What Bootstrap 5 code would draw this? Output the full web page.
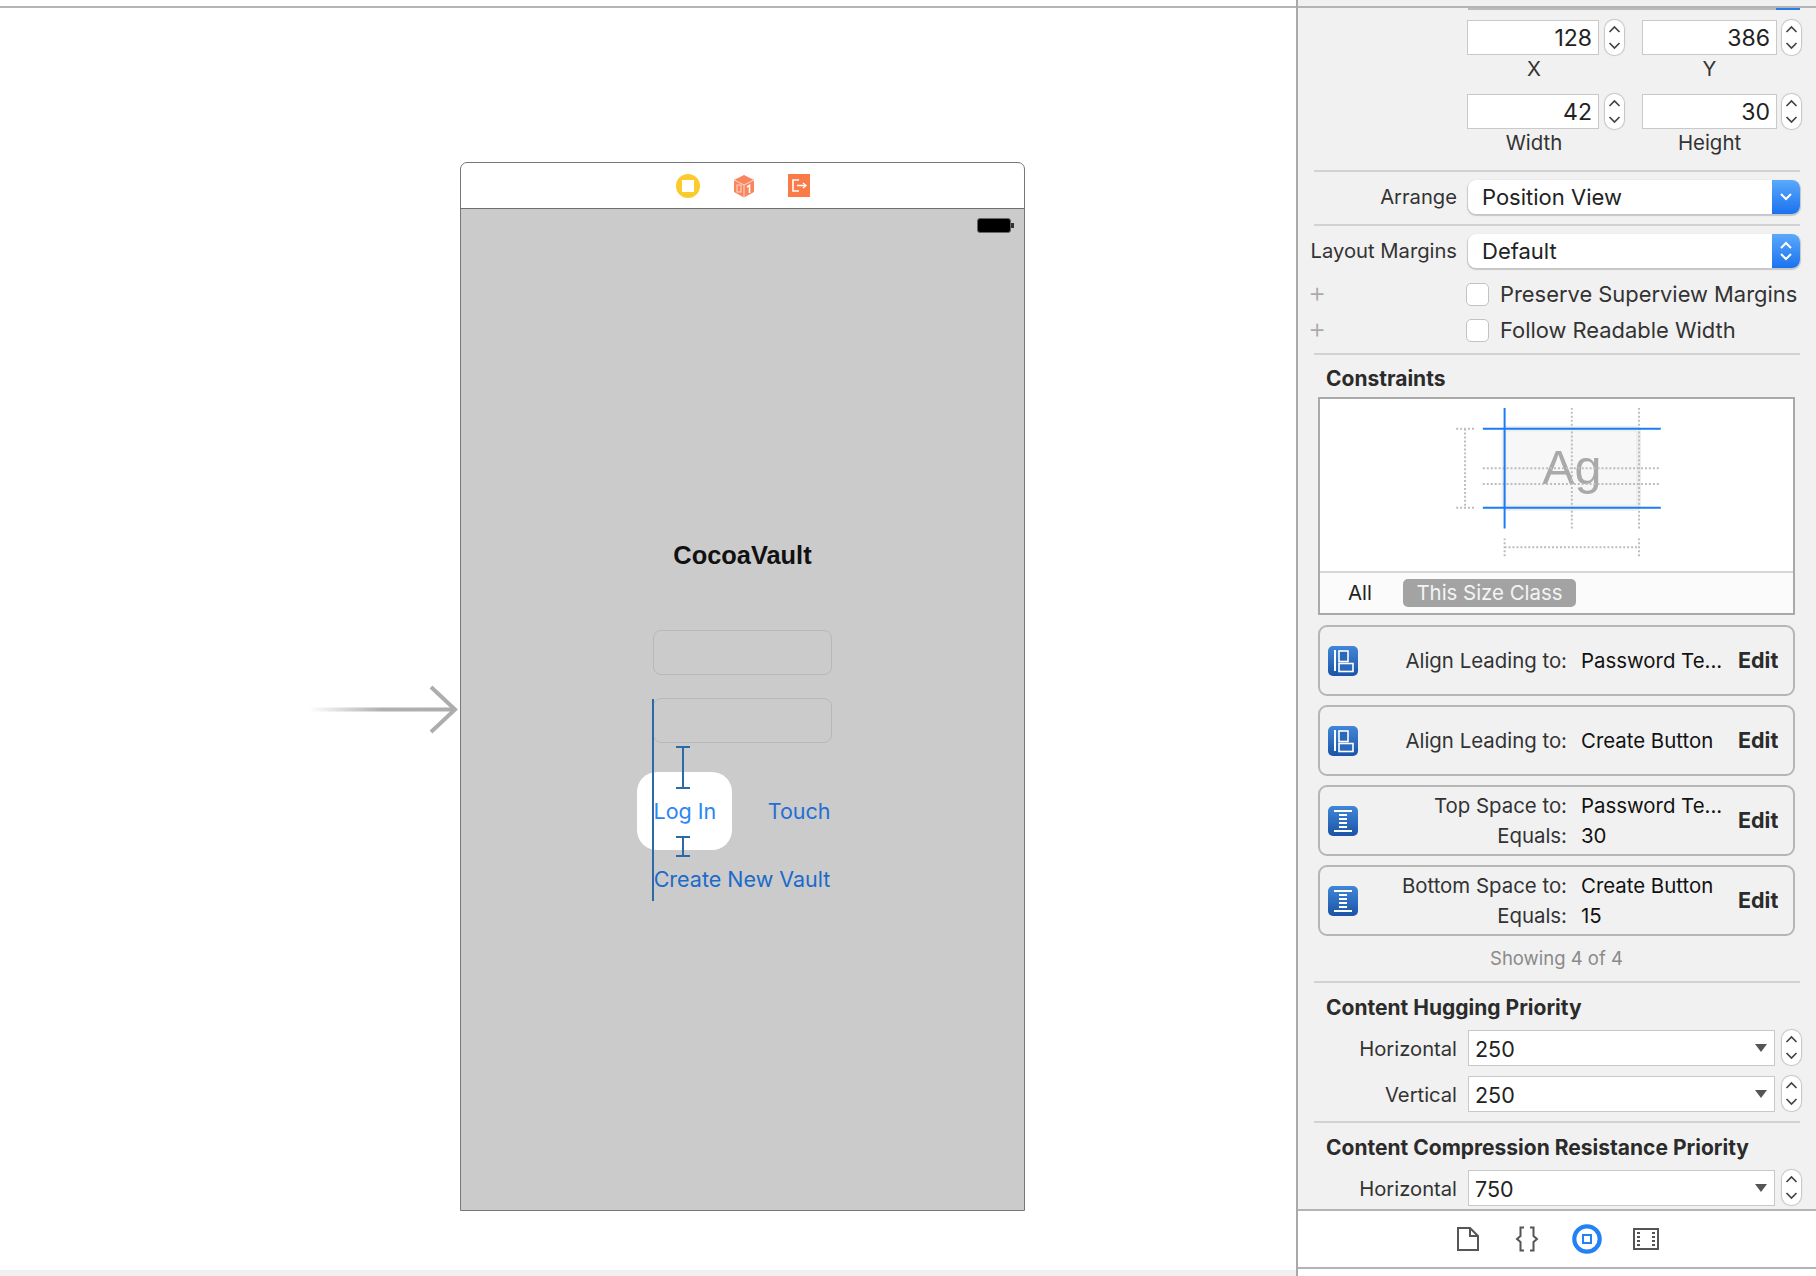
<!DOCTYPE html>
<html lang="en">
<head>
  <meta charset="UTF-8" />
  <title>CocoaVault storyboard</title>
  <link href="https://cdn.jsdelivr.net/npm/bootstrap@5.3.3/dist/css/bootstrap.min.css" rel="stylesheet">
  <style>
    html, body { height: 1276px; overflow: hidden; background: #fff; }
    body { font-family: Inter, "Noto Sans", sans-serif; font-size: 20.4px; color: #333; }

    /* canvas */
    .canvas-pane { width: 1296px; height: 1276px; border-top: 2px solid #b4b4b4; margin-top: 6px; }
    .canvas-foot { position: absolute; left: 0; right: 0; bottom: 6px; height: 6px; background: #f0f0f0; }
    .entry-arrow { position: absolute; left: 307px; top: 672px; }
    .device { position: absolute; left: 460px; top: 154px; width: 565px; height: 1049px; border: 1.5px solid #777; border-radius: 7px 7px 0 0; }
    .device-bar { height: 46px; gap: 33px; border-bottom: 1.5px solid #6e6e6e; }
    .device-screen { background: #cbcbcb; }
    .battery { margin: 9px 10px 0 0; }
    .app-title { font-family: "Liberation Sans", sans-serif; font-weight: 700; font-size: 25.4px; color: #111; margin-top: 307px; line-height: 30px; }
    .login-stack { width: 179px; margin: 60px 1px 0 0; font-size: 21.5px; color: #1f6fd6; }
    .field-box { height: 45px; border: 1.5px solid #b8b8b8; border-radius: 8px; margin-bottom: 23px; }
    .login-row { height: 46px; margin-top: 45px; padding: 0 1px; position: relative; }
    .login-active { position: absolute; left: -16px; top: -16px; width: 95px; height: 78px; background: #fff; border-radius: 20px; }
    .login-text { position: relative; color: #2a86f5; }
    .create-row { margin-top: 23px; line-height: 44px; color: #1c6ac9; white-space: nowrap; }
    .edge-line { position: absolute; left: 191px; top: 490px; width: 2px; height: 202px; background: #2a6aa8; }
    .beam { position: absolute; left: 215px; width: 14px; border-top: 2px solid #2a6aa8; border-bottom: 2px solid #2a6aa8; }
    .beam::after { content: ""; position: absolute; left: 6px; top: 0; bottom: 0; width: 2px; background: #2a6aa8; }
    .beam-top { top: 537px; height: 43px; }
    .beam-bottom { top: 627px; height: 21px; }

    /* inspector */
    .inspector { width: 520px; height: 1276px; background: #f1f1f1; border-left: 2px solid #a9a9a9; overflow: hidden; }
    .insp-top { height: 4px; border-top: 2px solid #b4b4b4; margin-top: 6px; }
    .insp-top-stub { height: 2px; margin-left: 170px; width: 332px; background: #bababa; border-right: 24px solid #2a7bf0; }
    .num-row { margin: 10px 0 0 169px; height: 35px; }
    .num-box { height: 35px; background: #fff; border: 1.5px solid #c9c9c9; text-align: right; padding-right: 6px; line-height: 34px; font-size: 23px; color: #222; }
    .num-a { width: 132px; }
    .num-b { width: 135px; margin-left: 18px; }
    .step-a { margin-left: 6px; }
    .step-b { margin-left: 5px; }
    .stepper { display: block; flex: none; width: 19px; height: 35px; background: #fff; border-radius: 9px; box-shadow: 0 0 1px 1px #c4c4c4; }
    .cap-row { margin-left: 170px; height: 28px; line-height: 28px; }
    .cap-a { width: 132px; margin-right: 25px; }
    .cap-b { width: 135px; margin-left: 17px; }
    .mb-row { margin-bottom: 11px; }
    .mb-sep { margin-bottom: 13px; }
    .insp-sep { height: 2px; background: #d2d2d2; margin: 0 16px; }
    .form-line { height: 34px; margin-top: 8px; margin-bottom: 10px; }
    .side-label { width: 159px; text-align: right; flex: none; margin-right: 11px; white-space: nowrap; font-size: 20.2px; }
    .pop-select { width: 332px; height: 34px; background: #fff; border-radius: 8px; box-shadow: 0 1px 1px 1px #c6c6c6; overflow: hidden; font-size: 22px; color: #222; padding-left: 14px; }
    .pop-cap { width: 28px; background: linear-gradient(#5aa9fb, #1b72ee); margin-left: auto; }
    .check-line { height: 23px; margin-left: 168px; white-space: nowrap; font-size: 21.9px; position: relative; }
    .check-box { width: 23px; height: 23px; background: #fff; border: 1.5px solid #c2c2c2; border-radius: 5px; margin-right: 11px; flex: none; }
    .plus-mark { position: absolute; left: -158px; top: -5px; color: #aaa; font-size: 28px; line-height: 28px; font-weight: 300; }
    .mt-check-1 { margin-top: 15px; }
    .mt-check-2 { margin-top: 13px; margin-bottom: 11px; }
    .sec-title { font-weight: 700; color: #2b2b2b; font-size: 21px; padding-left: 28px; white-space: nowrap; }
    .title-constraints { height: 42px; line-height: 48px; }
    .cons-box { width: 477px; height: 218px; margin-left: 20px; border: 2px solid #a9a9a9; background: #fff; }
    .cons-canvas { display: block; height: 174px; border-bottom: 2px solid #d6d6d6; }
    .cons-tabs { height: 40px; background: #fbfbfb; gap: 31px; padding-left: 28px; color: #222; }
    .size-pill { width: 173px; height: 28px; line-height: 27px; background: #a3a3a3; color: #f4f4f4; border-radius: 5px; text-align: center; }
    .cons-list { margin: 10px 21px 0 20px; gap: 9px; }
    .cons-card { height: 71px; border: 2px solid #b6b6b6; border-radius: 9px; padding-left: 8px; }
    .cons-icon { width: 30px; height: 30px; flex: none; }
    .cons-text { width: 380px; flex: none; line-height: 30px; white-space: nowrap; }
    .cons-key { width: 209px; text-align: right; margin-right: 14px; flex: none; }
    .cons-val { color: #111; }
    .cons-edit { font-weight: 700; color: #2b2b2b; font-size: 21.5px; }
    .showing { height: 45px; color: #8a8a8a; font-size: 18.5px; margin-left: 20px; width: 477px; }
    .title-priority { height: 46px; line-height: 50px; }
    .combo-line { height: 36px; margin-bottom: 10px; padding-top: 1px; }
    .combo-line .side-label { padding-top: 3px; }
    .combo-box { width: 307px; height: 36px; flex: none; background: #fff; border: 1.5px solid #c9c9c9; padding: 3px 0 0 6px; font-size: 21.5px; color: #222; margin-right: 7px; }
    .combo-tri { margin: -3px 7px 0 auto; width: 0; height: 0; border-left: 6.5px solid transparent; border-right: 6.5px solid transparent; border-top: 8px solid #555; }
    .insp-bar { height: 60px; margin-top: 4px; border-top: 2px solid #b4b4b4; border-bottom: 2px solid #b4b4b4; background: #fff; }
    .insp-tail { height: 12px; background: #fff; }
    .tool-slot { width: 59.6px; }
  </style>
</head>
<body class="d-flex">

  <!-- shared glyphs -->
  <svg width="0" height="0" class="position-absolute">
    <symbol id="stepper-glyph" viewBox="0 0 19 35">
      <path d="M4.500 12l5-5 5 5M4.500 23l5 5 5-5" fill="none" stroke="#444" stroke-width="1.700"/>
    </symbol>
    <symbol id="align-glyph" viewBox="0 0 30 30">
      <rect width="30" height="30" rx="5" fill="url(#icon-blue)"/>
      <path d="M7 4v21" stroke="#fff" stroke-width="2"/>
      <rect x="11" y="5" width="9" height="10.500" fill="#2b68bb" stroke="#fff" stroke-width="1.600"/>
      <rect x="11" y="17.500" width="14" height="8" fill="#2b68bb" stroke="#fff" stroke-width="1.600"/>
    </symbol>
    <symbol id="space-glyph" viewBox="0 0 30 30">
      <rect width="30" height="30" rx="5" fill="url(#icon-blue)"/>
      <path d="M6 5h18M6 25h18" stroke="#fff" stroke-width="1.800"/>
      <path d="M11 9h8M11 13h8M11 17h8M11 21h8" stroke="#fff" stroke-width="1.800"/>
    </symbol>
    <linearGradient id="icon-blue" x1="0" y1="0" x2="0" y2="1">
      <stop offset="0" stop-color="#4186d8"/>
      <stop offset="1" stop-color="#1a54a6"/>
    </linearGradient>
  </svg>

  <!-- storyboard canvas -->
  <div class="canvas-pane position-relative flex-shrink-0">
    <svg class="entry-arrow" width="152" height="60" viewBox="0 0 152 60">
      <defs>
        <linearGradient id="arrow-fade" x1="0" y1="0" x2="1" y2="0">
          <stop offset="0" stop-color="#b0b0b0" stop-opacity="0"/>
          <stop offset="0.5" stop-color="#b0b0b0"/>
          <stop offset="1" stop-color="#adadad"/>
        </linearGradient>
      </defs>
      <rect x="2" y="27.500" width="146" height="4" fill="url(#arrow-fade)"/>
      <path d="M124 7l24 22.500-24 22.500" fill="none" stroke="#adadad" stroke-width="4"/>
    </svg>

    <div class="device d-flex flex-column">
      <div class="device-bar d-flex align-items-center justify-content-center flex-shrink-0">
        <svg width="24" height="24" viewBox="0 0 24 24">
          <circle cx="12" cy="12" r="12" fill="#fbca2f"/>
          <rect x="6" y="6" width="12" height="12" fill="#fff"/>
        </svg>
        <svg width="22" height="24" viewBox="0 0 22 24">
          <path d="M11 1l10 5v12l-10 5.500-10-5.500V6z" fill="#f9855f"/>
          <path d="M1 6l10 5 10-5M11 11v12" fill="none" stroke="#fdd9cc" stroke-width="1"/>
          <path d="M14 13l2.500-1.500V19" fill="none" stroke="#fff" stroke-width="1.600"/>
          <rect x="4" y="11" width="4" height="7" fill="none" stroke="#fdd9cc"/>
        </svg>
        <svg width="22" height="23" viewBox="0 0 22 23">
          <rect width="22" height="23" fill="#fb7b48"/>
          <path d="M11 6H5v11h6" fill="none" stroke="#fff" stroke-width="1.600"/>
          <path d="M9 11.500h9M15 9l3 2.500-3 2.500" fill="none" stroke="#fff" stroke-width="1.400"/>
        </svg>
      </div>
      <div class="device-screen flex-grow-1 d-flex flex-column align-items-center position-relative">
        <div class="align-self-end battery">
          <svg class="d-block" width="37" height="15" viewBox="0 0 37 15">
            <rect x="0.500" y="0.500" width="33" height="14" rx="2.500" fill="#000" stroke="#666"/>
            <rect x="34" y="5" width="3" height="5" fill="#333"/>
          </svg>
        </div>
        <div class="app-title">CocoaVault</div>
        <div class="login-stack">
          <div class="field-box"></div>
          <div class="field-box mb-0"></div>
          <div class="login-row d-flex justify-content-between align-items-center">
            <div class="login-active"></div>
            <span class="login-text">Log In</span>
            <span>Touch</span>
          </div>
          <div class="create-row text-center">Create New Vault</div>
        </div>
        <div class="edge-line"></div>
        <div class="beam beam-top"></div>
        <div class="beam beam-bottom"></div>
      </div>
    </div>
    <div class="canvas-foot"></div>
  </div>

  <!-- inspector -->
  <div class="inspector flex-shrink-0 d-flex flex-column">
    <div class="insp-top flex-shrink-0"><div class="insp-top-stub"></div></div>

    <div class="num-row d-flex flex-shrink-0">
      <div class="num-box num-a">128</div>
      <svg class="stepper step-a"><use href="#stepper-glyph"/></svg>
      <div class="num-box num-b">386</div>
      <svg class="stepper step-b"><use href="#stepper-glyph"/></svg>
    </div>
    <div class="cap-row mb-row d-flex text-center flex-shrink-0">
      <div class="cap-a">X</div><div class="cap-b">Y</div>
    </div>
    <div class="num-row mt-0 d-flex flex-shrink-0">
      <div class="num-box num-a">42</div>
      <svg class="stepper step-a"><use href="#stepper-glyph"/></svg>
      <div class="num-box num-b">30</div>
      <svg class="stepper step-b"><use href="#stepper-glyph"/></svg>
    </div>
    <div class="cap-row mb-sep d-flex text-center flex-shrink-0">
      <div class="cap-a">Width</div><div class="cap-b">Height</div>
    </div>

    <div class="insp-sep flex-shrink-0"></div>
    <div class="form-line d-flex align-items-center flex-shrink-0">
      <div class="side-label">Arrange</div>
      <div class="pop-select d-flex align-items-center">Position View
        <div class="pop-cap align-self-stretch d-flex align-items-center justify-content-center">
          <svg width="14" height="10" viewBox="0 0 14 10"><path d="M2 2l5 5 5-5" fill="none" stroke="#fff" stroke-width="2"/></svg>
        </div>
      </div>
    </div>
    <div class="insp-sep flex-shrink-0"></div>
    <div class="form-line mb-0 d-flex align-items-center flex-shrink-0">
      <div class="side-label">Layout Margins</div>
      <div class="pop-select d-flex align-items-center">Default
        <div class="pop-cap align-self-stretch d-flex align-items-center justify-content-center">
          <svg width="14" height="22" viewBox="0 0 14 22"><path d="M2 8l5-5 5 5M2 14l5 5 5-5" fill="none" stroke="#fff" stroke-width="2"/></svg>
        </div>
      </div>
    </div>
    <div class="check-line mt-check-1 d-flex align-items-center flex-shrink-0">
      <span class="plus-mark">+</span><div class="check-box"></div>Preserve Superview Margins
    </div>
    <div class="check-line mt-check-2 d-flex align-items-center flex-shrink-0">
      <span class="plus-mark">+</span><div class="check-box"></div>Follow Readable Width
    </div>
    <div class="insp-sep flex-shrink-0"></div>

    <div class="sec-title title-constraints flex-shrink-0">Constraints</div>
    <div class="cons-box flex-shrink-0">
      <svg class="cons-canvas" width="473" height="174" viewBox="1320 399 473 174">
        <rect x="1501" y="426" width="141" height="86" rx="5" fill="#eeeeee"/>
        <rect x="1506" y="432" width="131" height="74" rx="4" fill="#f7f7f7"/>
        <text x="1572" y="485" text-anchor="middle" font-family="Liberation Sans, sans-serif" font-size="49" fill="#a9a9a9">Ag</text>
        <g fill="none" stroke="#bdbdbd" stroke-width="2" stroke-dasharray="2 2">
          <path d="M1482 469h180M1482 485h180M1572 408v122M1640 408v122"/>
          <path d="M1464 429v80M1455 429h18M1455 509h18"/>
          <path d="M1504 549h136M1504 540v18M1640 540v18"/>
        </g>
        <path d="M1504 408v122M1482 429h180M1482 509h180" fill="none" stroke="#1a7df5" stroke-width="2"/>
      </svg>
      <div class="cons-tabs d-flex align-items-center">
        <span>All</span>
        <span class="size-pill">This Size Class</span>
      </div>
    </div>

    <div class="cons-list d-flex flex-column flex-shrink-0">
      <div class="cons-card d-flex align-items-center">
        <svg class="cons-icon"><use href="#align-glyph"/></svg>
        <div class="cons-text">
          <div class="d-flex"><span class="cons-key">Align Leading to:</span><span class="cons-val">Password Te...</span></div>
        </div>
        <span class="cons-edit">Edit</span>
      </div>
      <div class="cons-card d-flex align-items-center">
        <svg class="cons-icon"><use href="#align-glyph"/></svg>
        <div class="cons-text">
          <div class="d-flex"><span class="cons-key">Align Leading to:</span><span class="cons-val">Create Button</span></div>
        </div>
        <span class="cons-edit">Edit</span>
      </div>
      <div class="cons-card d-flex align-items-center">
        <svg class="cons-icon"><use href="#space-glyph"/></svg>
        <div class="cons-text">
          <div class="d-flex"><span class="cons-key">Top Space to:</span><span class="cons-val">Password Te...</span></div>
          <div class="d-flex"><span class="cons-key">Equals:</span><span class="cons-val">30</span></div>
        </div>
        <span class="cons-edit">Edit</span>
      </div>
      <div class="cons-card d-flex align-items-center">
        <svg class="cons-icon"><use href="#space-glyph"/></svg>
        <div class="cons-text">
          <div class="d-flex"><span class="cons-key">Bottom Space to:</span><span class="cons-val">Create Button</span></div>
          <div class="d-flex"><span class="cons-key">Equals:</span><span class="cons-val">15</span></div>
        </div>
        <span class="cons-edit">Edit</span>
      </div>
    </div>

    <div class="showing d-flex align-items-center justify-content-center flex-shrink-0">Showing 4 of 4</div>
    <div class="insp-sep flex-shrink-0"></div>

    <div class="sec-title title-priority flex-shrink-0">Content Hugging Priority</div>
    <div class="combo-line d-flex align-items-center flex-shrink-0">
      <div class="side-label">Horizontal</div>
      <div class="combo-box d-flex align-items-center">250<span class="combo-tri"></span></div>
      <svg class="stepper"><use href="#stepper-glyph"/></svg>
    </div>
    <div class="combo-line d-flex align-items-center flex-shrink-0">
      <div class="side-label">Vertical</div>
      <div class="combo-box d-flex align-items-center">250<span class="combo-tri"></span></div>
      <svg class="stepper"><use href="#stepper-glyph"/></svg>
    </div>
    <div class="insp-sep flex-shrink-0"></div>

    <div class="sec-title title-priority flex-shrink-0">Content Compression Resistance Priority</div>
    <div class="combo-line mb-0 d-flex align-items-center flex-shrink-0">
      <div class="side-label">Horizontal</div>
      <div class="combo-box d-flex align-items-center">750<span class="combo-tri"></span></div>
      <svg class="stepper"><use href="#stepper-glyph"/></svg>
    </div>

    <div class="insp-bar d-flex align-items-center justify-content-center flex-shrink-0">
      <div class="tool-slot d-flex justify-content-center">
        <svg width="24" height="26" viewBox="0 0 24 26"><path d="M2 2h12l8 8v14H2zM14 2v8h8" fill="none" stroke="#555" stroke-width="2"/></svg>
      </div>
      <div class="tool-slot d-flex justify-content-center">
        <svg width="24" height="26" viewBox="0 0 24 26"><path d="M9 1.500H5.500v8.500L2 13l3.500 3v8.500H9M15 1.500h3.500v8.500L22 13l-3.500 3v8.500H15" fill="none" stroke="#555" stroke-width="2"/></svg>
      </div>
      <div class="tool-slot d-flex justify-content-center">
        <svg width="30" height="30" viewBox="0 0 30 30">
          <circle cx="15" cy="15" r="12.700" fill="none" stroke="#2282f5" stroke-width="4.200"/>
          <rect x="11" y="11" width="8" height="8" fill="none" stroke="#2282f5" stroke-width="2"/>
        </svg>
      </div>
      <div class="tool-slot d-flex justify-content-center">
        <svg width="26" height="22" viewBox="0 0 26 22">
          <rect x="1" y="1" width="24" height="20" fill="none" stroke="#555" stroke-width="2"/>
          <path d="M4 5h3M4 9h3M4 13h3M4 17h3M19 5h3M19 9h3M19 13h3M19 17h3" stroke="#555" stroke-width="2"/>
        </svg>
      </div>
    </div>
    <div class="insp-tail flex-shrink-0"></div>
  </div>

  <script src="https://cdn.jsdelivr.net/npm/bootstrap@5.3.3/dist/js/bootstrap.bundle.min.js"></script>
</body>
</html>
